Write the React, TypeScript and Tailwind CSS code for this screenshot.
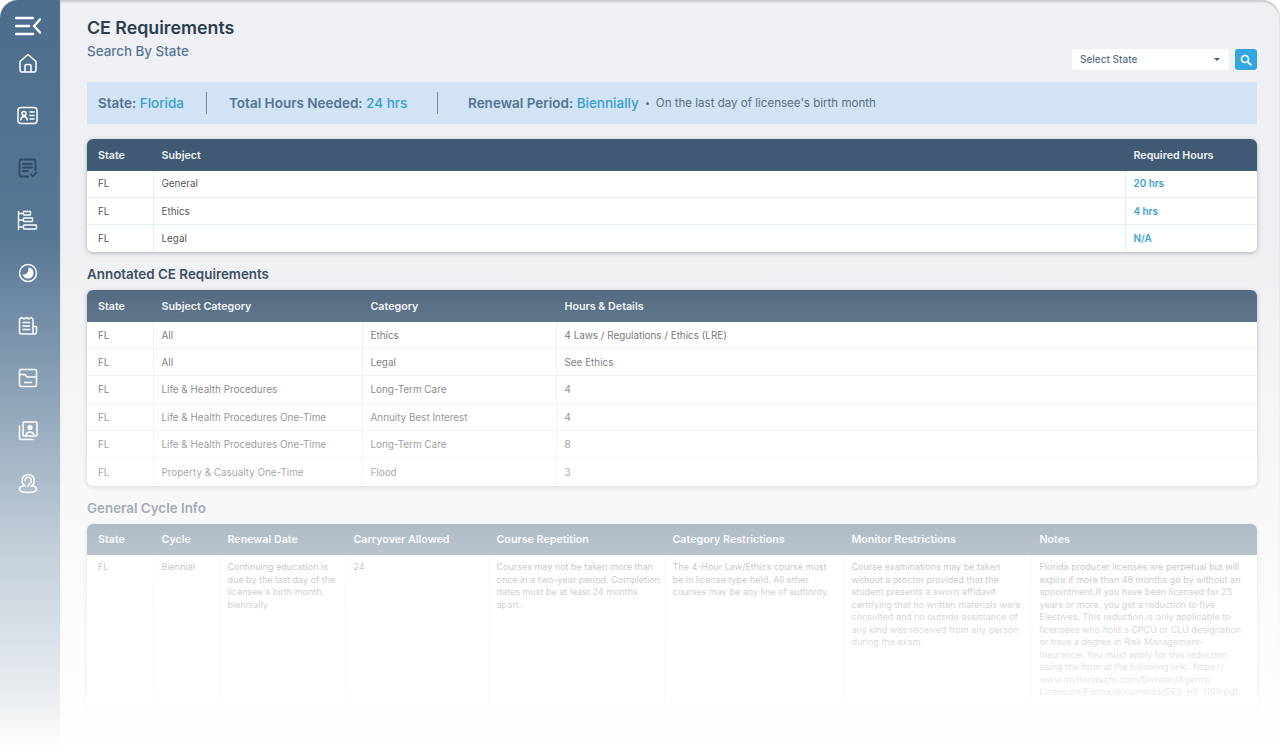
import type { ReactNode } from "react";

const iconClass = "fill-none stroke-current stroke-[1.5]";

const MenuIcon = () => (
  <svg width="28" height="20" viewBox="0 0 28 20" className="fill-none stroke-white stroke-[2.4]" strokeLinecap="round" strokeLinejoin="round">
    <path d="M2 2h17M2 10h13M2 18h17M26 3.500l-6 6.500 6 6.500" />
  </svg>
);

const HomeIcon = () => (
  <svg width="20" height="20" viewBox="0 0 20 20" className={iconClass} strokeLinejoin="round">
    <path d="M2 8.500 10 1.500l8 7v8.500a2 2 0 0 1-2 2H4a2 2 0 0 1-2-2z" />
    <path d="M7 19v-6a1.500 1.500 0 0 1 1.500-1.500h3A1.500 1.500 0 0 1 13 13v6" />
  </svg>
);

const CardIcon = () => (
  <svg width="21" height="19" viewBox="0 0 21 19" className={iconClass} strokeLinecap="round">
    <rect x="1" y="1.500" width="19" height="16" rx="3" />
    <circle cx="7" cy="7.500" r="2" />
    <path d="M3.800 14c.3-2.500 1.500-3.500 3.200-3.500s2.900 1 3.200 3.500M13 6h4M13 9.500h4M13 13h4" />
  </svg>
);

const DocCheckIcon = () => (
  <svg width="20" height="20" viewBox="0 0 20 20" className="fill-none stroke-[#2e4a69] stroke-[1.8]" strokeLinecap="round" strokeLinejoin="round">
    <path d="M10 18.500H3a1.500 1.500 0 0 1-1.500-1.500V3A1.500 1.500 0 0 1 3 1.500h13A1.500 1.500 0 0 1 17.500 3v9" />
    <path d="M5 6h9M5 9.500h9M5 13h5M13 16.500l1.800 1.800 3.700-3.800" />
  </svg>
);

const TreeIcon = () => (
  <svg width="21" height="21" viewBox="0 0 21 21" className="fill-none stroke-current stroke-[1.3]" strokeLinejoin="round">
    <path d="M1.500 1v19M1.500 3.500h5M1.500 10h5M1.500 17h5" />
    <rect x="6.500" y="1.500" width="7" height="3.500" rx=".5" />
    <rect x="6.500" y="8" width="9" height="3.500" rx=".5" />
    <rect x="6.500" y="15" width="13" height="4" rx=".5" />
  </svg>
);

const ClockIcon = () => (
  <svg width="20" height="20" viewBox="0 0 20 20">
    <circle cx="10" cy="10" r="8.500" className={iconClass} strokeWidth="1.700" />
    <path d="M10.500 4.500a5.500 5.500 0 1 1-5.800 7c2.800.3 6.300-1.500 5.800-7z" className="fill-current" />
  </svg>
);

const ReceiptIcon = () => (
  <svg width="20" height="20" viewBox="0 0 20 20" className={iconClass} strokeLinecap="round" strokeLinejoin="round">
    <path d="M15 17.500V3l-2-1.500L11 3 8.500 1.500 6 3 4 1.500 1.500 3v13a2 2 0 0 0 2 2H17a2 2 0 0 0 1.500-2v-5.500H15" />
    <path d="M5 6.500h6.500M5 10h6.500M5 13.500h6.500" />
  </svg>
);

const FolderIcon = () => (
  <svg width="20" height="20" viewBox="0 0 20 20" className={iconClass} strokeLinecap="round" strokeLinejoin="round">
    <rect x="1.500" y="1.500" width="17" height="17" rx="1.500" />
    <path d="M1.500 6.500h5.500l2 2.500h9.500M6.500 14.500h7" />
  </svg>
);

const PhotosIcon = () => (
  <svg width="20" height="20" viewBox="0 0 20 20" className={iconClass} strokeLinecap="round" strokeLinejoin="round">
    <rect x="5" y="1" width="14" height="14" rx="1" />
    <circle cx="12" cy="6.500" r="1.800" className="fill-current" />
    <path d="M8 14.500c.5-2.500 2-3.500 4-3.500s3.500 1 4 3.500M1.500 5v12.500a1 1 0 0 0 1 1H15" />
  </svg>
);

const PinUserIcon = () => (
  <svg width="20" height="21" viewBox="0 0 20 21" className={iconClass} strokeLinecap="round" strokeLinejoin="round">
    <path d="M7.500 13.200a6.200 6.200 0 1 1 5.500 0" />
    <path d="M7 7.500a3.200 3.200 0 1 1 6.200 1c-.5 1.500-2 2-3.200 5" />
    <path d="M5.500 13C3 13.300 1.500 14.500 1.500 16c0 2.500 3.500 3.500 8.500 3.500s8.500-1 8.500-3.500c0-1.500-1.500-2.700-4-3" />
  </svg>
);

const SearchIcon = () => (
  <svg width="12" height="12" viewBox="0 0 12 12" className="fill-none stroke-white stroke-[1.700]" strokeLinecap="round">
    <circle cx="5" cy="5" r="3.500" />
    <path d="M7.800 7.800 10.800 10.800" />
  </svg>
);

const navIcons = [
  <HomeIcon />,
  <CardIcon />,
  <DocCheckIcon />,
  <TreeIcon />,
  <ClockIcon />,
  <ReceiptIcon />,
  <FolderIcon />,
  <PhotosIcon />,
  <PinUserIcon />,
];

const Sidebar = () => (
  <aside className="w-[60px] shrink-0 rounded-tl-[18px] bg-[linear-gradient(180deg,#4d6d8d_0%,#587896_35%,#5f7d99_100%)] flex flex-col items-center text-white pt-[15px] pr-[5px]">
    <div className="h-[21px] mb-[1px] flex items-center">
      <MenuIcon />
    </div>
    {navIcons.map((icon, i) => (
      <div key={i} className="h-[52.500px] w-full flex items-center justify-center">
        {icon}
      </div>
    ))}
  </aside>
);

const Table = ({ cols, head, children }: { cols: string; head: string[]; children: ReactNode }) => (
  <div className="rounded-[6px] bg-white shadow-[0_1px_4px_rgba(30,45,60,0.35)] overflow-hidden">
    <div className={`grid ${cols} h-[31.500px] pt-[2px] bg-[#405a74] items-center text-[10.700px] font-semibold text-[#eef2f5]`}>
      {head.map((h) => (
        <div key={h} className="pl-[7.500px] first:pl-[11px] pr-1">
          {h}
        </div>
      ))}
    </div>
    {children}
  </div>
);

const Row = ({ cols, cells, accentLast }: { cols: string; cells: string[]; accentLast?: boolean }) => (
  <div className={`grid ${cols} h-[27.300px] border-b border-[#e4edf5] last:border-b-0 text-[9.900px] text-[#555]`}>
    {cells.map((c, i) => (
      <div
        key={i}
        className={`pl-[7.500px] first:pl-[11px] flex items-center border-r border-[#e4edf5] last:border-r-0 ${
          accentLast && i === cells.length - 1 ? "font-semibold text-[#3aa0d5]" : ""
        }`}
      >
        {c}
      </div>
    ))}
  </div>
);

const requirements = [
  ["FL", "General", "20 hrs"],
  ["FL", "Ethics", "4 hrs"],
  ["FL", "Legal", "N/A"],
];

const annotated = [
  ["FL", "All", "Ethics", "4 Laws / Regulations / Ethics (LRE)"],
  ["FL", "All", "Legal", "See Ethics"],
  ["FL", "Life & Health Procedures", "Long-Term Care", "4"],
  ["FL", "Life & Health Procedures One-Time", "Annuity Best Interest", "4"],
  ["FL", "Life & Health Procedures One-Time", "Long-Term Care", "8"],
  ["FL", "Property & Casualty One-Time", "Flood", "3"],
];

const cycle = [
  "FL",
  "Biennial",
  "Continuing education is due by the last day of the licensee's birth month, biennially",
  "24",
  "Courses may not be taken more than once in a two-year period. Completion dates must be at least 24 months apart.",
  "The 4-Hour Law/Ethics course must be in license type held.  All other courses may be any line of authority.",
  "Course examinations may be taken without a proctor provided that the student presents a sworn affidavit certifying that no written materials were consulted and no outside assistance of any kind was received from any person during the exam.",
  "Florida producer licenses are perpetual but will expire if more than 48 months go by without an appointment.If you have been licensed for 25 years or more, you get a reduction to five Electives. This reduction is only applicable to licensees who hold a CPCU or CLU designation or have a degree in Risk Management-Insurance. You must apply for this reduction using the form at the following link:\u00a0 https://\u200bwww.myfloridacfo.com/Division/Agents/\u200bLicensure/Forms/documents/DFS-H2-1109.pdf.",
];

// right padding differs per column so the lines wrap where they do in the design
const cyclePad = ["pr-[6px]", "pr-[6px]", "pr-[6px]", "pr-[6px]", "pr-0", "pr-[6px]", "pr-[6px]", "pr-[12px]"];

const cols1 = "grid-cols-[67px_972px_1fr]";
const cols2 = "grid-cols-[67px_209px_194px_1fr]";
const cols3 = "grid-cols-[67px_66px_126px_143px_176px_179px_188px_1fr]";

export default function App() {
  return (
    <div className="relative h-[752px] w-full overflow-hidden bg-white font-['Inter',sans-serif] antialiased flex">
      <Sidebar />
      <main className="flex-1 min-w-0 rounded-tr-[18px] bg-[#eff0f3] shadow-[inset_0_2px_2px_rgba(0,0,0,0.16)] pl-[27px] pr-[23px] pt-[16px]">
        <div className="flex justify-between items-end">
          <div>
            <h1 className="text-[17.800px] leading-[24px] font-semibold text-[#2c3e50]">CE Requirements</h1>
            <p className="mt-[1px] text-[13.400px] leading-[20px] font-medium text-[#587796]">Search By State</p>
          </div>
          <div className="flex gap-[6px] -mb-[9px]">
            <div className="w-[157px] h-[21px] bg-white rounded-[3px] flex items-center justify-between pl-[8px] pr-[9px] text-[10px] font-medium text-[#5a6f85]">
              Select State
              <span className="w-0 h-0 border-x-[3px] border-x-transparent border-t-[3px] border-t-[#45607c]" />
            </div>
            <button className="w-[22px] h-[21px] bg-[#33a7dd] rounded-[3px] flex items-center justify-center">
              <SearchIcon />
            </button>
          </div>
        </div>

        <div className="mt-[21px] h-[42px] bg-[#d2e3f5] flex items-center pl-[11px] text-[13.500px] font-semibold text-[#557391]">
          <span className="w-[108px]">
            State: <span className="text-[#369fd2] font-medium">Florida</span>
          </span>
          <span className="w-px h-[22px] bg-[#6f879f]" />
          <span className="ml-[22px] w-[208px]">
            Total Hours Needed: <span className="text-[#369fd2] font-medium">24 hrs</span>
          </span>
          <span className="w-px h-[22px] bg-[#6f879f]" />
          <span className="ml-[30px]">
            Renewal Period: <span className="text-[#369fd2] font-medium">Biennially</span>
          </span>
          <span className="ml-[7px] w-[3px] h-[3px] rounded-full bg-[#557391]" />
          <span className="ml-[7px] mt-[2px] text-[11.550px] font-normal text-[#5a6f85]">On the last day of licensee's birth month</span>
        </div>

        <div className="mt-[15px]">
          <Table cols={cols1} head={["State", "Subject", "Required Hours"]}>
            {requirements.map((r) => (
              <Row key={r[1]} cols={cols1} cells={r} accentLast />
            ))}
          </Table>
        </div>

        <h2 className="mt-[13px] text-[13.400px] leading-[18px] font-semibold text-[#2f4257]">Annotated CE Requirements</h2>
        <div className="mt-[7px]">
          <Table cols={cols2} head={["State", "Subject Category", "Category", "Hours & Details"]}>
            {annotated.map((r, i) => (
              <Row key={i} cols={cols2} cells={r} />
            ))}
          </Table>
        </div>

        <h2 className="mt-[13px] text-[13.400px] leading-[18px] font-semibold text-[#2f4257]">General Cycle Info</h2>
        <div className="mt-[7px]">
          <Table
            cols={cols3}
            head={[
              "State",
              "Cycle",
              "Renewal Date",
              "Carryover Allowed",
              "Course Repetition",
              "Category Restrictions",
              "Monitor Restrictions",
              "Notes",
            ]}
          >
            <div className={`grid ${cols3} h-[156px] text-[9px] leading-[12.500px] text-[#555]`}>
              {cycle.map((c, i) => (
                <div key={i} className={`pl-[7.500px] ${cyclePad[i]} first:pl-[11px] pt-[6px] border-r border-[#e4edf5] last:border-r-0 break-words`}>
                  {c}
                </div>
              ))}
            </div>
          </Table>
        </div>
      </main>
      {/* white fade over the lower part of the page */}
      <div className="absolute inset-0 pointer-events-none bg-[linear-gradient(180deg,rgba(255,255,255,0)_32%,rgba(255,255,255,0.62)_72%,rgba(255,255,255,0.86)_92%,#fff_100%)]" />
    </div>
  );
}
